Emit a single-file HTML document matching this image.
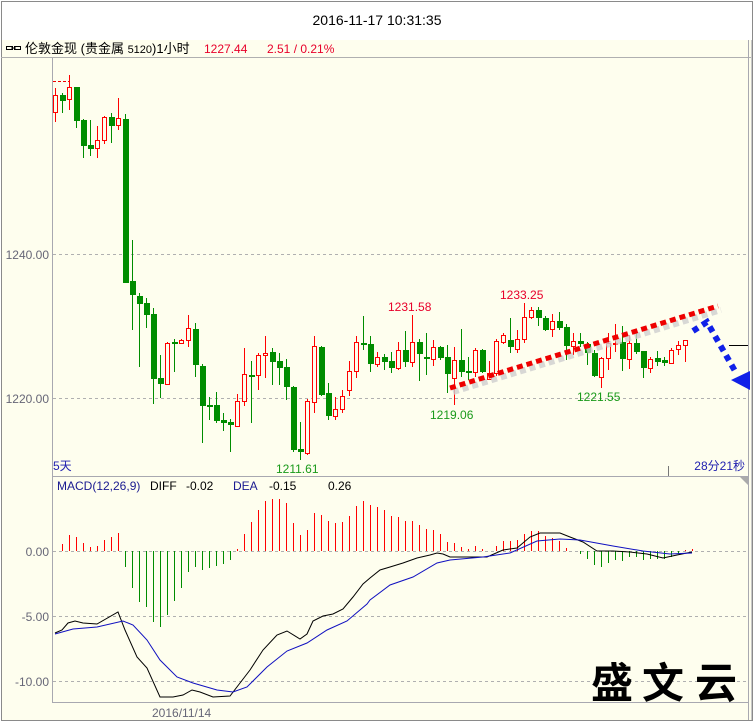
<!DOCTYPE html>
<html><head><meta charset="utf-8"><style>
html,body{margin:0;padding:0;background:#fff;}
body{width:754px;height:722px;overflow:hidden;position:relative;font-family:"Liberation Sans","Noto Sans CJK SC",sans-serif;}
svg text{font-family:"Liberation Sans","Noto Sans CJK SC",sans-serif;}
</style></head><body>
<svg width="754" height="722" viewBox="0 0 754 722" xmlns="http://www.w3.org/2000/svg" style="position:absolute;left:0;top:0">
<rect x="0" y="0" width="754" height="722" fill="#fff"/>
<rect x="1" y="40" width="751" height="680" fill="#fefeee"/>
<rect x="1.5" y="1.5" width="751" height="719" fill="none" stroke="#8a8a8a"/>
<text x="377" y="25" font-size="14" text-anchor="middle" fill="#000">2016-11-17 10:31:35</text>
<line x1="1" y1="57.5" x2="752" y2="57.5" stroke="#b0b0b0"/>
<g stroke="#000" fill="none" stroke-width="1"><rect x="6.5" y="46.5" width="6" height="3"/><rect x="14.5" y="46.5" width="6" height="3"/><line x1="11" y1="48" x2="16" y2="48"/></g>
<text x="25" y="53" font-size="13" fill="#000">伦敦金现 (贵金属 <tspan font-size="11">5120</tspan>)1小时</text>
<text x="204" y="53" font-size="12" fill="#e8002a">1227.44</text>
<text x="267" y="53" font-size="12" fill="#e8002a">2.51 / 0.21%</text>
<line x1="52.5" y1="58" x2="52.5" y2="702" stroke="#a8a8b0"/>
<line x1="748.5" y1="40" x2="748.5" y2="720" stroke="#a8a8b0"/>
<line x1="751.5" y1="40" x2="751.5" y2="720" stroke="#c8c8c8"/>
<line x1="52" y1="476.5" x2="748" y2="476.5" stroke="#a8a8b0"/>
<line x1="52" y1="702.5" x2="748" y2="702.5" stroke="#a8a8b0"/>
<polygon points="740,477 748,477 748,485" fill="#aaa"/>
<g stroke="#b0b0b0" stroke-dasharray="3,3">
<line x1="53" y1="254.5" x2="748" y2="254.5"/><line x1="53" y1="398.5" x2="748" y2="398.5"/>
<line x1="53" y1="551.5" x2="748" y2="551.5"/><line x1="53" y1="616.5" x2="748" y2="616.5"/><line x1="53" y1="681.5" x2="748" y2="681.5"/>
</g>
<g font-size="12" fill="#666677" text-anchor="end">
<text x="49" y="259">1240.00</text><text x="49" y="403">1220.00</text>
<text x="49" y="556">0.00</text><text x="49" y="621">-5.00</text><text x="49" y="686">-10.00</text>
</g>
<text x="152" y="717" font-size="12" fill="#666677">2016/11/14</text>
<line x1="668.5" y1="466" x2="668.5" y2="476" stroke="#777"/>
<text x="53" y="470" font-size="12" fill="#2020b0">5天</text>
<text x="745" y="470" font-size="12" fill="#2020b0" text-anchor="end">28分21秒</text>
<line x1="53" y1="81.5" x2="69" y2="81.5" stroke="#e00" stroke-dasharray="3,2"/>
<line x1="729" y1="345.5" x2="748" y2="345.5" stroke="#000"/>
<g stroke-width="1">
<g stroke="#ff0000">
<line x1="55.5" y1="88" x2="55.5" y2="122"/><line x1="69.5" y1="75" x2="69.5" y2="110"/><line x1="97.5" y1="126" x2="97.5" y2="158"/><line x1="104.5" y1="116" x2="104.5" y2="144"/><line x1="118.5" y1="98" x2="118.5" y2="130"/>
<line x1="167.5" y1="342" x2="167.5" y2="384"/><line x1="181.5" y1="339" x2="181.5" y2="344"/><line x1="188.5" y1="315" x2="188.5" y2="347"/><line x1="237.5" y1="394" x2="237.5" y2="427"/><line x1="244.5" y1="348" x2="244.5" y2="406"/><line x1="258.5" y1="353" x2="258.5" y2="390"/><line x1="265.5" y1="336" x2="265.5" y2="378"/>
<line x1="307.5" y1="399" x2="307.5" y2="455"/><line x1="314.5" y1="336" x2="314.5" y2="413"/><line x1="335.5" y1="397" x2="335.5" y2="420"/><line x1="342.5" y1="390" x2="342.5" y2="413"/><line x1="349.5" y1="361" x2="349.5" y2="396"/><line x1="356.5" y1="336" x2="356.5" y2="378"/>
<line x1="377.5" y1="352" x2="377.5" y2="367"/><line x1="398.5" y1="342" x2="398.5" y2="370"/><line x1="412.5" y1="315" x2="412.5" y2="367"/><line x1="433.5" y1="340" x2="433.5" y2="366"/><line x1="454.5" y1="347" x2="454.5" y2="405"/><line x1="475.5" y1="348" x2="475.5" y2="377"/><line x1="489.5" y1="361" x2="489.5" y2="380"/><line x1="496.5" y1="339" x2="496.5" y2="376"/><line x1="503.5" y1="333" x2="503.5" y2="344"/>
<line x1="517.5" y1="330" x2="517.5" y2="353"/><line x1="524.5" y1="303" x2="524.5" y2="343"/><line x1="531.5" y1="307" x2="531.5" y2="319"/><line x1="552.5" y1="314" x2="552.5" y2="337"/><line x1="573.5" y1="333" x2="573.5" y2="355"/><line x1="601.5" y1="357" x2="601.5" y2="388"/><line x1="608.5" y1="333" x2="608.5" y2="370"/><line x1="615.5" y1="324" x2="615.5" y2="352"/><line x1="629.5" y1="335" x2="629.5" y2="369"/><line x1="650.5" y1="357" x2="650.5" y2="373"/><line x1="671.5" y1="348" x2="671.5" y2="363"/><line x1="678.5" y1="341" x2="678.5" y2="355"/><line x1="685.5" y1="340" x2="685.5" y2="362"/>
</g>
<g stroke="#008c00">
<line x1="62.5" y1="93" x2="62.5" y2="113"/><line x1="76.5" y1="87" x2="76.5" y2="128"/><line x1="83.5" y1="119" x2="83.5" y2="158"/><line x1="90.5" y1="120" x2="90.5" y2="156"/><line x1="111.5" y1="113" x2="111.5" y2="143"/><line x1="125.5" y1="114" x2="125.5" y2="283"/>
<line x1="132.5" y1="240" x2="132.5" y2="330"/><line x1="139.5" y1="293" x2="139.5" y2="367"/><line x1="146.5" y1="298" x2="146.5" y2="328"/><line x1="153.5" y1="308" x2="153.5" y2="404"/><line x1="160.5" y1="355" x2="160.5" y2="398"/><line x1="174.5" y1="339" x2="174.5" y2="372"/><line x1="195.5" y1="323" x2="195.5" y2="377"/><line x1="202.5" y1="364" x2="202.5" y2="443"/><line x1="209.5" y1="397" x2="209.5" y2="420"/><line x1="216.5" y1="392" x2="216.5" y2="423"/><line x1="223.5" y1="413" x2="223.5" y2="431"/><line x1="230.5" y1="419" x2="230.5" y2="452"/>
<line x1="251.5" y1="361" x2="251.5" y2="423"/><line x1="272.5" y1="348" x2="272.5" y2="385"/><line x1="279.5" y1="353" x2="279.5" y2="385"/><line x1="286.5" y1="359" x2="286.5" y2="400"/><line x1="293.5" y1="386" x2="293.5" y2="452"/><line x1="300.5" y1="422" x2="300.5" y2="460"/><line x1="321.5" y1="346" x2="321.5" y2="396"/><line x1="328.5" y1="383" x2="328.5" y2="420"/>
<line x1="363.5" y1="316" x2="363.5" y2="350"/><line x1="370.5" y1="336" x2="370.5" y2="372"/><line x1="384.5" y1="354" x2="384.5" y2="370"/><line x1="391.5" y1="352" x2="391.5" y2="373"/><line x1="405.5" y1="331" x2="405.5" y2="367"/><line x1="419.5" y1="339" x2="419.5" y2="381"/><line x1="426.5" y1="333" x2="426.5" y2="375"/><line x1="440.5" y1="346" x2="440.5" y2="360"/><line x1="447.5" y1="345" x2="447.5" y2="393"/><line x1="461.5" y1="329" x2="461.5" y2="377"/><line x1="468.5" y1="357" x2="468.5" y2="380"/><line x1="482.5" y1="349" x2="482.5" y2="373"/>
<line x1="510.5" y1="318" x2="510.5" y2="353"/><line x1="538.5" y1="307" x2="538.5" y2="326"/><line x1="545.5" y1="316" x2="545.5" y2="331"/><line x1="559.5" y1="312" x2="559.5" y2="330"/><line x1="566.5" y1="324" x2="566.5" y2="360"/><line x1="580.5" y1="333" x2="580.5" y2="347"/><line x1="587.5" y1="342" x2="587.5" y2="365"/><line x1="594.5" y1="350" x2="594.5" y2="377"/><line x1="622.5" y1="326" x2="622.5" y2="371"/><line x1="636.5" y1="333" x2="636.5" y2="354"/><line x1="643.5" y1="351" x2="643.5" y2="378"/><line x1="657.5" y1="351" x2="657.5" y2="366"/><line x1="664.5" y1="357" x2="664.5" y2="366"/>
</g>
<g fill="#008c00">
<rect x="60" y="95" width="6" height="6"/><rect x="74" y="87" width="6" height="34"/><rect x="81" y="120" width="6" height="26"/><rect x="88" y="145" width="6" height="4"/><rect x="109" y="117" width="6" height="9"/><rect x="123" y="119" width="6" height="164"/>
<rect x="130" y="281" width="6" height="14"/><rect x="137" y="296" width="6" height="8"/><rect x="144" y="303" width="6" height="12"/><rect x="151" y="314" width="6" height="65"/><rect x="158" y="378" width="6" height="6"/><rect x="172" y="342" width="6" height="2"/><rect x="193" y="329" width="6" height="36"/><rect x="200" y="366" width="6" height="40"/><rect x="207" y="405" width="6" height="2"/><rect x="214" y="405" width="6" height="16"/><rect x="221" y="420" width="6" height="3"/><rect x="228" y="422" width="6" height="3"/>
<rect x="249" y="375" width="6" height="2"/><rect x="270" y="352" width="6" height="10"/><rect x="277" y="361" width="6" height="7"/><rect x="284" y="367" width="6" height="20"/><rect x="291" y="387" width="6" height="63"/><rect x="298" y="449" width="6" height="3"/><rect x="319" y="347" width="6" height="48"/><rect x="326" y="393" width="6" height="23"/>
<rect x="361" y="343" width="6" height="2"/><rect x="368" y="344" width="6" height="20"/><rect x="382" y="357" width="6" height="5"/><rect x="389" y="361" width="6" height="7"/><rect x="403" y="350" width="6" height="12"/><rect x="417" y="342" width="6" height="12"/><rect x="424" y="357" width="6" height="2"/><rect x="438" y="347" width="6" height="11"/><rect x="445" y="357" width="6" height="17"/><rect x="459" y="360" width="6" height="12"/><rect x="466" y="371" width="6" height="2"/><rect x="480" y="350" width="6" height="22"/>
<rect x="508" y="340" width="6" height="7"/><rect x="536" y="310" width="6" height="8"/><rect x="543" y="318" width="6" height="12"/><rect x="557" y="321" width="6" height="7"/><rect x="564" y="327" width="6" height="19"/><rect x="578" y="341" width="6" height="3"/><rect x="585" y="344" width="6" height="9"/><rect x="592" y="353" width="6" height="23"/><rect x="620" y="342" width="6" height="17"/><rect x="634" y="343" width="6" height="9"/><rect x="641" y="351" width="6" height="17"/><rect x="655" y="358" width="6" height="4"/><rect x="662" y="360" width="6" height="3"/>
</g>
<g fill="#fefeee" stroke="#ff0000">
<rect x="53.5" y="95.5" width="4" height="17"/><rect x="67.5" y="87.5" width="4" height="12"/><rect x="95.5" y="140.5" width="4" height="8"/><rect x="102.5" y="117.5" width="4" height="23"/><rect x="116.5" y="118.5" width="4" height="7"/>
<rect x="165.5" y="343.5" width="4" height="41"/><rect x="179.5" y="340.5" width="4" height="3"/><rect x="186.5" y="328.5" width="4" height="12"/><rect x="235.5" y="401.5" width="4" height="25"/><rect x="242.5" y="374.5" width="4" height="27"/><rect x="256.5" y="355.5" width="4" height="20"/><rect x="263.5" y="353.5" width="4" height="2"/>
<rect x="305.5" y="401.5" width="4" height="52"/><rect x="312.5" y="346.5" width="4" height="56"/><rect x="333.5" y="409.5" width="4" height="7"/><rect x="340.5" y="396.5" width="4" height="13"/><rect x="347.5" y="371.5" width="4" height="19"/><rect x="354.5" y="342.5" width="4" height="29"/>
<rect x="375.5" y="357.5" width="4" height="7"/><rect x="396.5" y="350.5" width="4" height="18"/><rect x="410.5" y="342.5" width="4" height="20"/><rect x="431.5" y="347.5" width="4" height="12"/><rect x="452.5" y="360.5" width="4" height="18"/><rect x="473.5" y="350.5" width="4" height="22"/><rect x="487.5" y="373.5" width="4" height="6"/><rect x="494.5" y="341.5" width="4" height="32"/><rect x="501.5" y="335.5" width="4" height="7"/>
<rect x="515.5" y="339.5" width="4" height="10"/><rect x="522.5" y="317.5" width="4" height="22"/><rect x="529.5" y="310.5" width="4" height="7"/><rect x="550.5" y="321.5" width="4" height="8"/><rect x="571.5" y="341.5" width="4" height="5"/><rect x="599.5" y="358.5" width="4" height="19"/><rect x="606.5" y="343.5" width="4" height="15"/><rect x="613.5" y="343.5" width="4" height="1"/><rect x="627.5" y="343.5" width="4" height="16"/><rect x="648.5" y="359.5" width="4" height="9"/><rect x="669.5" y="350.5" width="4" height="13"/><rect x="676.5" y="345.5" width="4" height="4"/><rect x="683.5" y="340.5" width="4" height="5"/>
</g>
</g>
<g font-size="12">
<text x="388" y="311" fill="#e8002a">1231.58</text>
<text x="500" y="299" fill="#e8002a">1233.25</text>
<text x="430" y="419" fill="#1a9a1a">1219.06</text>
<text x="577" y="401" fill="#1a9a1a">1221.55</text>
<text x="276" y="473" fill="#1a9a1a">1211.61</text>
</g>
<line x1="453" y1="392" x2="721" y2="310" stroke="#cfcfcf" stroke-width="6" stroke-dasharray="6,4" opacity="0.8"/>
<line x1="450" y1="388" x2="718" y2="306" stroke="#ee0000" stroke-width="5" stroke-dasharray="6,4"/>
<polyline points="693,331 707,322 735,371" fill="none" stroke="#1020e8" stroke-width="6" stroke-dasharray="6,5"/>
<polygon points="731,380 750,371 750,390" fill="#1020e8"/>
<g font-size="12">
<text x="57" y="490" fill="#1a1a90">MACD(12,26,9)</text>
<text x="150" y="490" fill="#000">DIFF</text>
<text x="186" y="490" fill="#000">-0.02</text>
<text x="233" y="490" fill="#1a1a90">DEA</text>
<text x="269" y="490" fill="#000">-0.15</text>
<text x="328" y="490" fill="#000">0.26</text>
</g>
<g stroke="#ff0000">
<line x1="62.5" y1="551" x2="62.5" y2="544"/><line x1="69.5" y1="551" x2="69.5" y2="535"/><line x1="76.5" y1="551" x2="76.5" y2="537"/><line x1="83.5" y1="551" x2="83.5" y2="543"/><line x1="90.5" y1="551" x2="90.5" y2="547"/><line x1="97.5" y1="551" x2="97.5" y2="546"/><line x1="104.5" y1="551" x2="104.5" y2="540"/><line x1="111.5" y1="551" x2="111.5" y2="537"/><line x1="118.5" y1="551" x2="118.5" y2="533"/>
<line x1="237.5" y1="551" x2="237.5" y2="549"/><line x1="244.5" y1="551" x2="244.5" y2="534"/><line x1="251.5" y1="551" x2="251.5" y2="522"/><line x1="258.5" y1="551" x2="258.5" y2="510"/><line x1="265.5" y1="551" x2="265.5" y2="501"/><line x1="272.5" y1="551" x2="272.5" y2="499"/><line x1="279.5" y1="551" x2="279.5" y2="499"/><line x1="286.5" y1="551" x2="286.5" y2="503"/><line x1="293.5" y1="551" x2="293.5" y2="523"/><line x1="300.5" y1="551" x2="300.5" y2="535"/><line x1="307.5" y1="551" x2="307.5" y2="530"/><line x1="314.5" y1="551" x2="314.5" y2="513"/><line x1="321.5" y1="551" x2="321.5" y2="515"/><line x1="328.5" y1="551" x2="328.5" y2="521"/><line x1="335.5" y1="551" x2="335.5" y2="523"/><line x1="342.5" y1="551" x2="342.5" y2="522"/><line x1="349.5" y1="551" x2="349.5" y2="516"/><line x1="356.5" y1="551" x2="356.5" y2="506"/><line x1="363.5" y1="551" x2="363.5" y2="501"/><line x1="370.5" y1="551" x2="370.5" y2="505"/><line x1="377.5" y1="551" x2="377.5" y2="507"/><line x1="384.5" y1="551" x2="384.5" y2="510"/><line x1="391.5" y1="551" x2="391.5" y2="516"/><line x1="398.5" y1="551" x2="398.5" y2="517"/><line x1="405.5" y1="551" x2="405.5" y2="521"/><line x1="412.5" y1="551" x2="412.5" y2="521"/><line x1="419.5" y1="551" x2="419.5" y2="525"/><line x1="426.5" y1="551" x2="426.5" y2="529"/><line x1="433.5" y1="551" x2="433.5" y2="530"/><line x1="440.5" y1="551" x2="440.5" y2="534"/><line x1="447.5" y1="551" x2="447.5" y2="542"/><line x1="454.5" y1="551" x2="454.5" y2="543"/><line x1="461.5" y1="551" x2="461.5" y2="547"/><line x1="468.5" y1="551" x2="468.5" y2="549"/><line x1="475.5" y1="551" x2="475.5" y2="546"/><line x1="482.5" y1="551" x2="482.5" y2="549"/><line x1="496.5" y1="551" x2="496.5" y2="546"/><line x1="503.5" y1="551" x2="503.5" y2="541"/><line x1="510.5" y1="551" x2="510.5" y2="541"/><line x1="517.5" y1="551" x2="517.5" y2="540"/><line x1="524.5" y1="551" x2="524.5" y2="534"/><line x1="531.5" y1="551" x2="531.5" y2="531"/><line x1="538.5" y1="551" x2="538.5" y2="531"/><line x1="545.5" y1="551" x2="545.5" y2="536"/><line x1="552.5" y1="551" x2="552.5" y2="538"/><line x1="559.5" y1="551" x2="559.5" y2="541"/><line x1="566.5" y1="551" x2="566.5" y2="548"/><line x1="685.5" y1="551" x2="685.5" y2="550"/><line x1="692.5" y1="551" x2="692.5" y2="549"/>
</g>
<g stroke="#008c00">
<line x1="125.5" y1="551" x2="125.5" y2="567"/><line x1="132.5" y1="551" x2="132.5" y2="588"/><line x1="139.5" y1="551" x2="139.5" y2="602"/><line x1="146.5" y1="551" x2="146.5" y2="607"/><line x1="153.5" y1="551" x2="153.5" y2="622"/><line x1="160.5" y1="551" x2="160.5" y2="627"/><line x1="167.5" y1="551" x2="167.5" y2="615"/><line x1="174.5" y1="551" x2="174.5" y2="601"/><line x1="181.5" y1="551" x2="181.5" y2="588"/><line x1="188.5" y1="551" x2="188.5" y2="572"/><line x1="195.5" y1="551" x2="195.5" y2="567"/><line x1="202.5" y1="551" x2="202.5" y2="570"/><line x1="209.5" y1="551" x2="209.5" y2="568"/><line x1="216.5" y1="551" x2="216.5" y2="566"/><line x1="223.5" y1="551" x2="223.5" y2="564"/><line x1="230.5" y1="551" x2="230.5" y2="560"/>
<line x1="580.5" y1="551" x2="580.5" y2="554"/><line x1="587.5" y1="551" x2="587.5" y2="559"/><line x1="594.5" y1="551" x2="594.5" y2="565"/><line x1="601.5" y1="551" x2="601.5" y2="567"/><line x1="608.5" y1="551" x2="608.5" y2="563"/><line x1="615.5" y1="551" x2="615.5" y2="560"/><line x1="622.5" y1="551" x2="622.5" y2="561"/><line x1="629.5" y1="551" x2="629.5" y2="557"/><line x1="636.5" y1="551" x2="636.5" y2="557"/><line x1="643.5" y1="551" x2="643.5" y2="560"/><line x1="650.5" y1="551" x2="650.5" y2="559"/><line x1="657.5" y1="551" x2="657.5" y2="559"/><line x1="664.5" y1="551" x2="664.5" y2="559"/><line x1="671.5" y1="551" x2="671.5" y2="557"/><line x1="678.5" y1="551" x2="678.5" y2="554"/>
</g>
<polyline fill="none" stroke="#000" stroke-width="1" points="55,633 62,630 68,623 75,621 83,623 97,624 118,612 125,630 137,657 147,668 160,697 173,697 183,695 192,690 200,692 213,697 230,696 240,683 250,670 263,650 277,635 287,631 300,639 307,634 313,621 323,616 333,614 343,609 353,597 363,584 370,578 380,570 390,567 403,563 417,558 430,555 437,553 443,554 450,557 463,557 477,557 487,557 503,550 517,548 530,537 540,533 560,533 570,537 583,542 597,551 613,551 630,552 647,554 663,558 677,555 692,552"/>
<polyline fill="none" stroke="#1010c0" stroke-width="1" points="55,634 73,629 97,627 123,621 133,625 147,640 160,660 177,677 193,683 217,690 233,692 247,687 267,667 287,651 307,643 327,630 347,621 367,604 370,600 390,585 413,577 437,563 450,560 483,557 510,553 537,541 560,539 580,540 613,546 643,551 670,554 692,553"/>
<g font-family="'Noto Serif CJK SC','Noto Sans CJK SC',serif" font-weight="600" font-size="42" fill="#000">
<text x="591" y="698">盛</text><text x="642" y="698">文</text><text x="695" y="698">云</text>
</g>
</svg>
</body></html>
